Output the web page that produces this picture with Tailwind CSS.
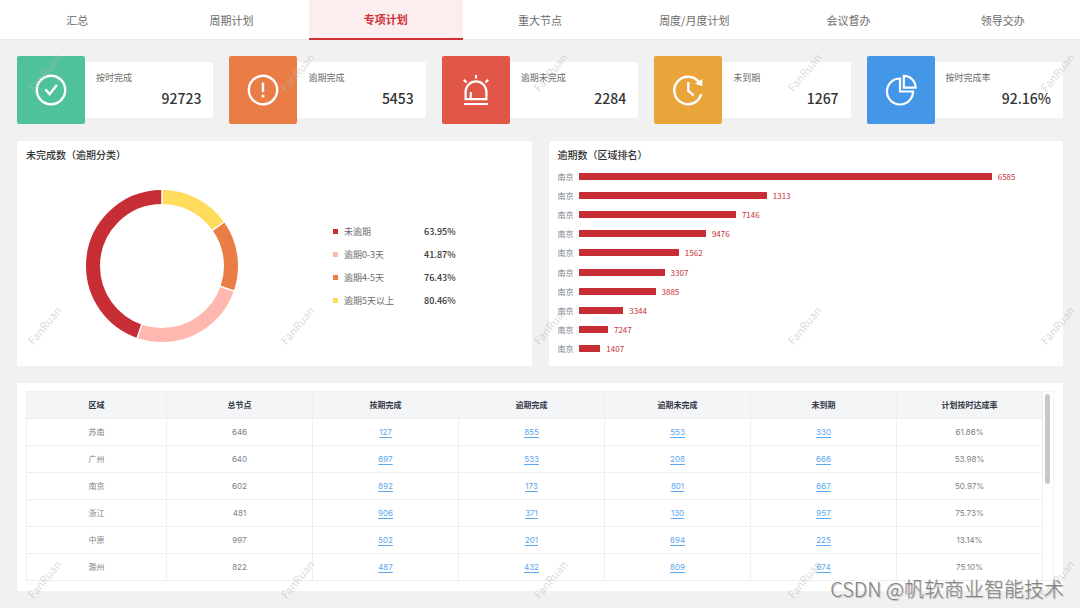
<!DOCTYPE html>
<html lang="zh-CN">
<head>
<meta charset="utf-8">
<meta name="viewport" content="width=device-width, initial-scale=1">
<title>专项计划</title>
<script src="https://cdn.jsdelivr.net/npm/@tailwindcss/browser@4"></script>
</head>
<body class="relative min-h-screen overflow-hidden bg-[#f1f1f1] font-['Noto_Sans_CJK_SC',sans-serif] text-[#6b6b6b]">
<nav class="grid h-10 grid-cols-7 border-b border-[#ececec] bg-white text-[11px]">
  <button class="h-10">汇总</button>
  <button class="h-10">周期计划</button>
  <button class="h-10 border-b-2 border-[#d02f36] bg-[#fceeee] font-bold text-[#d02f36]" aria-current="page">专项计划</button>
  <button class="h-10">重大节点</button>
  <button class="h-10">周度/月度计划</button>
  <button class="h-10">会议督办</button>
  <button class="h-10">领导交办</button>
</nav>

<main class="flex flex-col gap-[17px] px-[17px] pt-4 pb-4">
  <section class="grid grid-cols-5 gap-4">
    <div class="flex items-center">
      <div class="flex size-[68px] shrink-0 items-center justify-center rounded-[2px] bg-[#4fc29b]">
        <svg class="size-9" viewBox="0 0 36 36" fill="none" stroke="#fff" stroke-width="2.4"><circle cx="18" cy="18" r="14.2"/><path d="M12.3 17.3l4.3 4.8 7.3-9"/></svg>
      </div>
      <div class="flex h-14 flex-1 flex-col justify-between rounded-r-[2px] bg-white pt-2 pr-3 pb-[9px] pl-[11px]">
        <span class="text-[9px] leading-4">按时完成</span>
        <span class="text-right text-[14px] leading-[22px] font-medium text-[#333]">92723</span>
      </div>
    </div>
    <div class="flex items-center">
      <div class="flex size-[68px] shrink-0 items-center justify-center rounded-[2px] bg-[#e97d45]">
        <svg class="size-9" viewBox="0 0 36 36" fill="none" stroke="#fff" stroke-width="2.4"><circle cx="18" cy="18" r="14.2"/><path d="M18 10.5v9.6"/><circle cx="18" cy="24" r="1.6" fill="#fff" stroke="none"/></svg>
      </div>
      <div class="flex h-14 flex-1 flex-col justify-between rounded-r-[2px] bg-white pt-2 pr-3 pb-[9px] pl-[11px]">
        <span class="text-[9px] leading-4">逾期完成</span>
        <span class="text-right text-[14px] leading-[22px] font-medium text-[#333]">5453</span>
      </div>
    </div>
    <div class="flex items-center">
      <div class="flex size-[68px] shrink-0 items-center justify-center rounded-[2px] bg-[#e05747]">
        <svg class="size-9" viewBox="0 0 36 36" fill="none" stroke="#fff" stroke-width="2.2"><path d="M7.600 27.200V19.800a10.400 10.400 0 0 1 20.800 0v7.400zM6 32h24M18 3v3.600M5.800 7.800l2.700 2.600M30.200 7.800l-2.700 2.600M12.800 27v-7"/></svg>
      </div>
      <div class="flex h-14 flex-1 flex-col justify-between rounded-r-[2px] bg-white pt-2 pr-3 pb-[9px] pl-[11px]">
        <span class="text-[9px] leading-4">逾期未完成</span>
        <span class="text-right text-[14px] leading-[22px] font-medium text-[#333]">2284</span>
      </div>
    </div>
    <div class="flex items-center">
      <div class="flex size-[68px] shrink-0 items-center justify-center rounded-[2px] bg-[#e9a43a]">
        <svg class="size-9" viewBox="0 0 36 36" fill="none" stroke="#fff" stroke-width="2.400"><path d="M29 10.300A13.700 13.700 0 1 0 31.200 22.200M18.300 10v9l5.400 4.400"/><path d="M32.400 7v7.300l-7.400-2.600z" fill="#fff" stroke="none"/></svg>
      </div>
      <div class="flex h-14 flex-1 flex-col justify-between rounded-r-[2px] bg-white pt-2 pr-3 pb-[9px] pl-[11px]">
        <span class="text-[9px] leading-4">未到期</span>
        <span class="text-right text-[14px] leading-[22px] font-medium text-[#333]">1267</span>
      </div>
    </div>
    <div class="flex items-center">
      <div class="flex size-[68px] shrink-0 items-center justify-center rounded-[2px] bg-[#4497e6]">
        <svg class="size-9" viewBox="0 0 36 36" fill="none" stroke="#fff" stroke-width="2.200"><path d="M17 6.500A13 13 0 1 0 30 19.500H17z"/><path d="M20.800 3.800a11.800 11.800 0 0 1 11.800 11.800H20.800z"/></svg>
      </div>
      <div class="flex h-14 flex-1 flex-col justify-between rounded-r-[2px] bg-white pt-2 pr-3 pb-[9px] pl-[11px]">
        <span class="text-[9px] leading-4">按时完成率</span>
        <span class="text-right text-[14px] leading-[22px] font-medium text-[#333]">92.16%</span>
      </div>
    </div>
  </section>

  <section class="grid grid-cols-2 gap-[17px]">
    <div class="flex flex-col rounded-[2px] bg-white px-[9px] pt-[6px]">
      <h2 class="text-[10px] leading-4 font-medium text-[#333]">未完成数（逾期分类）</h2>
      <div class="flex items-center gap-[94px] pt-[26px] pl-[59px]">
        <svg class="size-[154px] shrink-0" viewBox="-77 -77 154 154" fill="none" stroke-width="14" role="img" aria-label="逾期分类">
          <g transform="rotate(-90)">
            <circle r="69" pathLength="360" stroke="#ffdc5c" stroke-dasharray="54.700 305.300"/>
            <circle r="69" pathLength="360" stroke="#e97d45" stroke-dasharray="54.500 305.500" stroke-dashoffset="-54.700"/>
            <circle r="69" pathLength="360" stroke="#ffb8af" stroke-dasharray="89.800 270.200" stroke-dashoffset="-109.200"/>
            <circle r="69" pathLength="360" stroke="#c72d34" stroke-dasharray="161 199" stroke-dashoffset="-199"/>
          </g>
          <g stroke="#fff" stroke-width="1.500"><path d="M0-60v-17"/><path d="M0-60v-17" transform="rotate(54.700)"/><path d="M0-60v-17" transform="rotate(109.200)"/><path d="M0-60v-17" transform="rotate(199)"/></g>
        </svg>
        <ul class="flex flex-col gap-[7px] text-[9px] leading-4">
          <li class="flex items-center"><i class="mr-[6px] size-[5px] bg-[#c72d34]"></i><span class="w-20">未逾期</span><b class="font-medium text-[#333]">63.95%</b></li>
          <li class="flex items-center"><i class="mr-[6px] size-[5px] bg-[#ffb8af]"></i><span class="w-20">逾期0-3天</span><b class="font-medium text-[#333]">41.87%</b></li>
          <li class="flex items-center"><i class="mr-[6px] size-[5px] bg-[#e97d45]"></i><span class="w-20">逾期4-5天</span><b class="font-medium text-[#333]">76.43%</b></li>
          <li class="flex items-center"><i class="mr-[6px] size-[5px] bg-[#ffdc5c]"></i><span class="w-20">逾期5天以上</span><b class="font-medium text-[#333]">80.46%</b></li>
        </ul>
      </div>
    </div>
    <div class="rounded-[2px] bg-white px-[9px] pt-[6px] pb-2">
      <h2 class="text-[10px] leading-4 font-medium text-[#333]">逾期数（区域排名）</h2>
      <ul id="rank" class="flex h-[195px] flex-col justify-between pt-1 text-[8px] leading-[19px]"></ul>
    </div>
  </section>

  <section class="rounded-[2px] bg-white px-[9px] pt-2 pb-[10px]">
    <div class="flex border-r border-[#f3f3f3]">
      <div class="flex-1">
        <table class="w-full table-fixed border-collapse text-center font-['Inter','Noto_Sans_CJK_SC',sans-serif] text-[8px] leading-4 text-[#7b7f87]">
          <colgroup><col class="w-[140px]"><col span="6"></colgroup>
          <thead class="bg-[#f4f5f7] text-[#333846]"><tr id="head"></tr></thead>
          <tbody id="rows"></tbody>
        </table>
      </div>
      <div class="w-[10px] border-y border-[#f3f3f3] px-[2px] pt-[2px]"><div class="h-[90px] w-[5px] rounded-full bg-[#c8c8c8]"></div></div>
    </div>
  </section>
</main>

<div id="marks" class="pointer-events-none absolute inset-0 overflow-hidden" aria-hidden="true"></div>
<p class="absolute right-4 bottom-1 text-[20px] leading-[30px] font-light text-[#808080] [text-shadow:1px_1px_1px_#bbb]">CSDN @帆软商业智能技术</p>

<script>
const rank = [[86.9,6585],[39.6,1313],[33.1,7146],[26.8,9476],[21.1,1562],[18.1,3307],[16.2,3885],[9.4,3344],[6.2,7247],[4.6,1407]];
document.getElementById('rank').innerHTML = rank.map(([w, v]) =>
  `<li class="flex"><span class="w-[21px] shrink-0 text-[#7b7f87]">南京</span><div class="flex flex-1 items-center"><div class="mr-[6px] h-[7px] shrink-0 bg-[#c72d34]" style="width:${w}%"></div><span class="text-[#c72d34]">${v}</span></div></li>`).join('');

const head = ['区域','总节点','按期完成','逾期完成','逾期未完成','未到期','计划按时达成率'];
document.getElementById('head').innerHTML = head.map(t => `<th scope="col" class="h-[27px] border border-[#eeeff1] p-0 font-bold">${t}</th>`).join('');

const rows = [
  ['苏南',646,127,855,553,330,'61.86%'],
  ['广州',640,697,533,208,666,'53.98%'],
  ['南京',602,892,173,801,667,'50.97%'],
  ['浙江',481,906,371,130,957,'75.73%'],
  ['中原',997,502,201,694,225,'13.14%'],
  ['滁州',822,487,432,809,674,'75.10%']
];
document.getElementById('rows').innerHTML = rows.map(r => '<tr>' + r.map((v, i) =>
  `<td class="h-[27px] border border-[#eeeff1] p-0">${i > 1 && i < 6 ? `<a href="#" class="text-[#5ba7ee] underline underline-offset-2">${v}</a>` : v}</td>`).join('') + '</tr>').join('');

let marks = '';
for (const y of [72, 325, 579]) for (const x of [44, 297, 550, 804, 1057])
  marks += `<span class="absolute -translate-x-1/2 -translate-y-1/2 -rotate-50 text-[11px] leading-4 text-[#b8b8b8]/50" style="left:${x}px;top:${y}px">FanRuan</span>`;
document.getElementById('marks').innerHTML = marks;
</script>
</body>
</html>
